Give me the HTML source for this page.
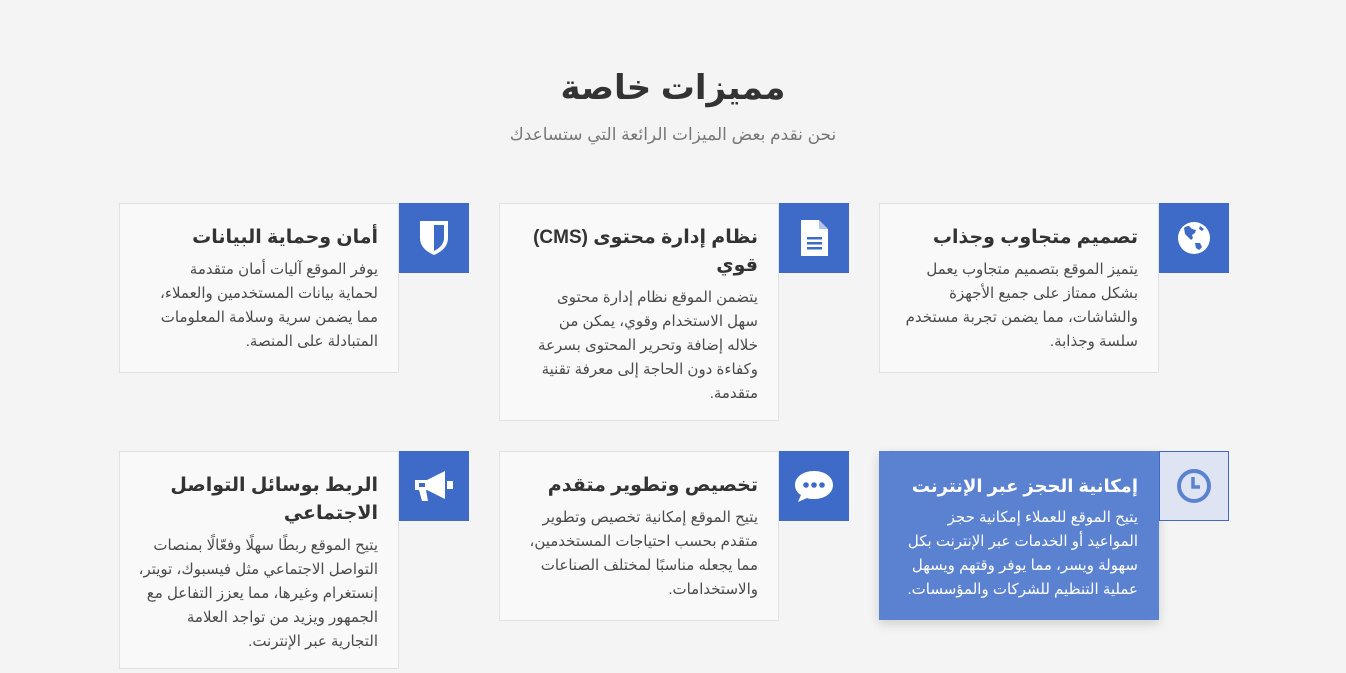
<!DOCTYPE html>
<html lang="ar" dir="rtl"><head><meta charset="utf-8"><style>
body{margin:0;background:#f4f4f4;font-family:"Liberation Sans","DejaVu Sans",sans-serif;width:1346px;height:673px;overflow:hidden;position:relative}
h1{position:absolute;top:68px;left:0;right:0;text-align:center;margin:0;font-size:34px;font-weight:bold;color:#333}
.sub{position:absolute;top:125px;left:0;right:0;text-align:center;font-size:17px;color:#777}
.card{position:absolute;width:280px;box-sizing:border-box;background:#f9f9fa;border:1px solid #e2e2e2;padding:20px 20px 18px 20px}
.card h3{margin:0 0 6px;font-size:19px;font-weight:bold;color:#333;line-height:28px;white-space:nowrap}
.card p{margin:0;font-size:15px;line-height:24px;color:#4a4a4a;white-space:nowrap}
.ic{position:absolute;width:70px;height:70px;background:#3f6bc8;display:flex;align-items:center;justify-content:center}
.hl{background:#5b82d1;border-color:#5b82d1;box-shadow:0 4px 10px rgba(0,0,0,.15)}
.hl h3,.hl p{color:#fff}
.ich{background:#dfe4f3;border:1px solid #3f6bc8;box-sizing:border-box}
</style></head><body>
<h1>مميزات خاصة</h1>
<div class="sub">نحن نقدم بعض الميزات الرائعة التي ستساعدك</div>

<div class="card" style="left:879px;top:203px;height:170px"><h3>تصميم متجاوب وجذاب</h3><p>يتميز الموقع بتصميم متجاوب يعمل<br>بشكل ممتاز على جميع الأجهزة<br>والشاشات، مما يضمن تجربة مستخدم<br>سلسة وجذابة.</p></div>
<div class="ic" style="left:1159px;top:203px"><svg width="34" height="34" viewBox="0 0 34 34"><circle cx="17" cy="17" r="16" fill="#fff"/><path d="M7 7 Q9 5 12 5 L15 8 L19 9 L18 12 L15 14 L16 17 L14 19 L11 16 L8 13 Z M18 22 L23 22 L25 26 L22 29 L19 27 Z M23 5 L27 8 L25 10 L22 8 Z" fill="#3f6bc8"/></svg></div>

<div class="card" style="left:499px;top:203px;height:218px"><h3>نظام إدارة محتوى (CMS)<br>قوي</h3><p>يتضمن الموقع نظام إدارة محتوى<br>سهل الاستخدام وقوي، يمكن من<br>خلاله إضافة وتحرير المحتوى بسرعة<br>وكفاءة دون الحاجة إلى معرفة تقنية<br>متقدمة.</p></div>
<div class="ic" style="left:779px;top:203px"><svg width="30" height="38" viewBox="0 0 30 38"><path d="M2 1H20L29 10V37H2Z" fill="#fff"/><path d="M20 1V10H29" fill="#3f6bc8" opacity=".4"/><rect x="8" y="18" width="15" height="2.5" fill="#3f6bc8"/><rect x="8" y="23" width="15" height="2.5" fill="#3f6bc8"/><rect x="8" y="28" width="15" height="2.5" fill="#3f6bc8"/></svg></div>

<div class="card" style="left:119px;top:203px;height:170px"><h3>أمان وحماية البيانات</h3><p>يوفر الموقع آليات أمان متقدمة<br>لحماية بيانات المستخدمين والعملاء،<br>مما يضمن سرية وسلامة المعلومات<br>المتبادلة على المنصة.</p></div>
<div class="ic" style="left:399px;top:203px"><svg width="30" height="36" viewBox="0 0 30 36"><path d="M1 1H29V18Q29 29 15 35Q1 29 1 18Z" fill="#fff"/><path d="M15 5H25V18Q25 26 15 31Z" fill="#3f6bc8"/></svg></div>

<div class="card hl" style="left:879px;top:451px;height:169px"><h3 style="font-size:18px">إمكانية الحجز عبر الإنترنت</h3><p>يتيح الموقع للعملاء إمكانية حجز<br>المواعيد أو الخدمات عبر الإنترنت بكل<br>سهولة ويسر، مما يوفر وقتهم ويسهل<br>عملية التنظيم للشركات والمؤسسات.</p></div>
<div class="ic ich" style="left:1159px;top:451px"><svg width="36" height="36" viewBox="0 0 36 36"><circle cx="18" cy="18" r="15" fill="none" stroke="#5b82d1" stroke-width="4"/><path d="M17 9V19H24" fill="none" stroke="#5b82d1" stroke-width="3.5"/></svg></div>

<div class="card" style="left:499px;top:451px;height:170px"><h3>تخصيص وتطوير متقدم</h3><p>يتيح الموقع إمكانية تخصيص وتطوير<br>متقدم بحسب احتياجات المستخدمين،<br>مما يجعله مناسبًا لمختلف الصناعات<br>والاستخدامات.</p></div>
<div class="ic" style="left:779px;top:451px"><svg width="40" height="34" viewBox="0 0 40 34"><path d="M20 2C9 2 1 8 1 16C1 20 3 24 7 26L4 33L13 29C15 30 17 30 20 30C31 30 39 24 39 16C39 8 31 2 20 2Z" fill="#fff"/><circle cx="12" cy="16" r="2.8" fill="#3f6bc8"/><circle cx="20" cy="16" r="2.8" fill="#3f6bc8"/><circle cx="28" cy="16" r="2.8" fill="#3f6bc8"/></svg></div>

<div class="card" style="left:119px;top:451px;height:218px"><h3>الربط بوسائل التواصل<br>الاجتماعي</h3><p>يتيح الموقع ربطًا سهلًا وفعّالًا بمنصات<br>التواصل الاجتماعي مثل فيسبوك، تويتر،<br>إنستغرام وغيرها، مما يعزز التفاعل مع<br>الجمهور ويزيد من تواجد العلامة<br>التجارية عبر الإنترنت.</p></div>
<div class="ic" style="left:399px;top:451px"><svg width="42" height="34" viewBox="0 0 42 34"><path d="M2 11H14L32 2V30L14 21H2Z" fill="#fff"/><path d="M6 21H13L15 32H9Z" fill="#fff"/><rect x="34" y="12" width="6" height="8" fill="#fff"/><rect x="6" y="14" width="6" height="4" fill="#3f6bc8"/></svg></div>
</body></html>
